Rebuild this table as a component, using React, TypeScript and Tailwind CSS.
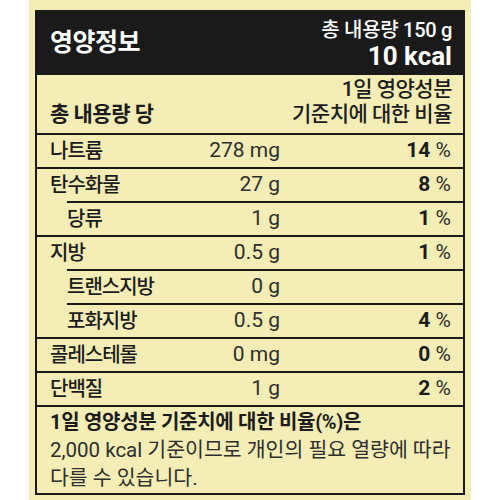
import React from "react";

type Row = {
  name: string;
  amount: string;
  pct?: string;
  sub?: boolean;
};

const rows: Row[] = [
  { name: "나트륨", amount: "278 mg", pct: "14" },
  { name: "탄수화물", amount: "27 g", pct: "8" },
  { name: "당류", amount: "1 g", pct: "1", sub: true },
  { name: "지방", amount: "0.5 g", pct: "1" },
  { name: "트랜스지방", amount: "0 g", sub: true },
  { name: "포화지방", amount: "0.5 g", pct: "4", sub: true },
  { name: "콜레스테롤", amount: "0 mg", pct: "0" },
  { name: "단백질", amount: "1 g", pct: "2" },
];

const font = { fontFamily: "Roboto, 'Noto Sans CJK KR', sans-serif" };

export default function App() {
  return (
    <div className="w-[500px] h-[500px] bg-white flex justify-center" style={font}>
      <div className="w-[442px] h-full bg-[#f4edb6] pt-[10px] px-[6px] text-[#1c1c1c]">
        <div className="border-2 border-[#1a1a1a] h-[485px] flex flex-col">
          <div className="bg-[#1a1a1a] text-white h-[63px] flex justify-between items-center pl-[13px] pr-[11px]">
            <span className="text-[25px] font-bold leading-none mt-[-2px] tracking-[-0.5px]">영양정보</span>
            <div className="text-right">
              <div className="text-[20px] font-medium leading-[24px] tracking-[-0.3px]">총 내용량 150 g</div>
              <div className="text-[26px] font-bold leading-[28px]">10 kcal</div>
            </div>
          </div>
          <div className="h-[58px] flex justify-between items-end pl-[13px] pr-[11px] pb-[6px]">
            <span className="text-[21px] font-bold leading-[26px] tracking-[-0.5px]">총 내용량 당</span>
            <div className="text-right text-[21px] font-medium leading-[25px] tracking-[-0.5px]">
              <div>1일 영양성분</div>
              <div>기준치에 대한 비율</div>
            </div>
          </div>
          {rows.map((r) => (
            <div
              key={r.name}
              className={
                r.sub
                  ? "h-[34px] border-t-2 border-[#1a1a1a] ml-[30px] pr-[12px] flex items-center"
                  : "h-[34px] border-t-2 border-[#1a1a1a] pl-[13px] pr-[12px] flex items-center"
              }
            >
              <div
                className={
                  r.sub
                    ? "w-[213px] flex justify-between items-center"
                    : "w-[230px] flex justify-between items-center"
                }
              >
                <span className="text-[20px] font-medium tracking-[-1px]">{r.name}</span>
                <span className="text-[21px] text-[#2e2e2e]">{r.amount}</span>
              </div>
              <div className="flex-1 text-right text-[21px]">
                {r.pct && (
                  <>
                    <span className="font-bold">{r.pct}</span>
                    <span className="text-[#2e2e2e]"> %</span>
                  </>
                )}
              </div>
            </div>
          ))}
          <div className="flex-1 border-t-2 border-[#1a1a1a] pl-[13px] pt-[1px] text-[20px] leading-[28px]">
            <div className="font-bold tracking-[-0.3px]">1일 영양성분 기준치에 대한 비율(%)은</div>
            <div className="text-[#2e2e2e] text-[20.5px]">2,000 kcal 기준이므로 개인의 필요 열량에 따라</div>
            <div className="text-[#2e2e2e] text-[20.5px]">다를 수 있습니다.</div>
          </div>
        </div>
      </div>
    </div>
  );
}
